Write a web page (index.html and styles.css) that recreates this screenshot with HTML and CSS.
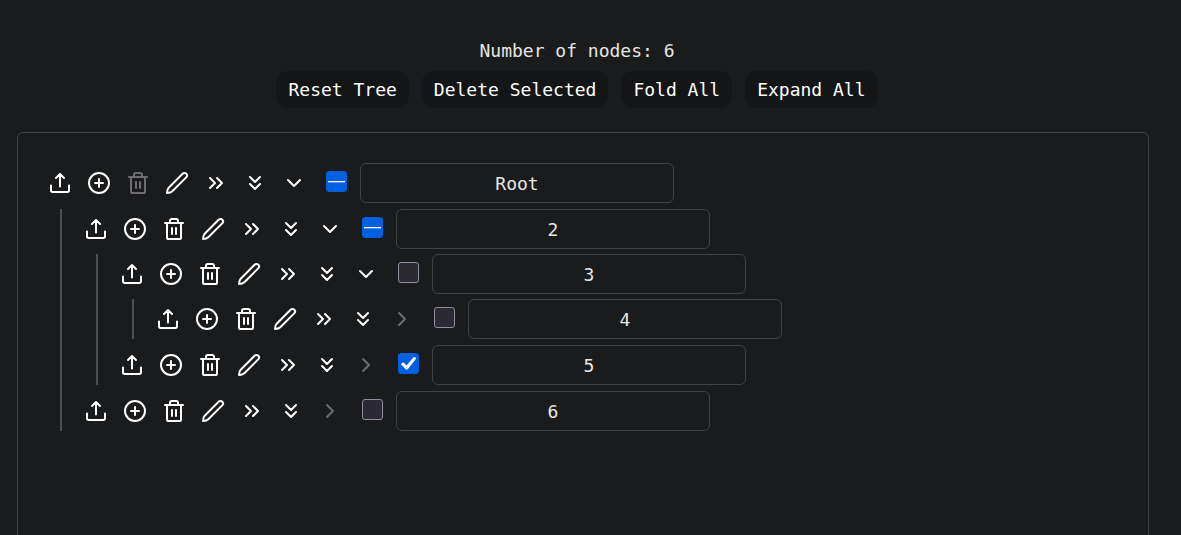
FILE: index.html
```html
<!DOCTYPE html>
<html lang="en">
<head>
<meta charset="utf-8">
<meta name="viewport" content="width=device-width, initial-scale=1">
<title>Node tree</title>
<link rel="stylesheet" href="styles.css">
</head>
<body>
<svg class="sprite" aria-hidden="true">
  <symbol id="upload" viewBox="0 0 24 24"><path d="M12 15.500V3M8 7 12 3 16 7M3 14.500v4.800Q3 21 4.700 21h14.600Q21 21 21 19.300V14.500"/></symbol>
  <symbol id="add" viewBox="0 0 24 24"><circle cx="12" cy="12" r="10"/><path d="M12 8v8M8 12h8"/></symbol>
  <symbol id="trash" viewBox="0 0 24 24"><path d="M3 6h18M5 6v14.400Q5 22 6.600 22h10.800Q19 22 19 20.400V6M8 6V4Q8 2 9.800 2h4.400Q16 2 16 4v2M10 11v6M14 11v6"/></symbol>
  <symbol id="edit" viewBox="0 0 24 24"><path d="M2 22C2 19.600 2.300 18.100 3.700 16.700L17.600 2.800C18.700 1.700 20.200 1.600 21.300 2.700C22.400 3.800 22.300 5.300 21.200 6.400L7.300 20.300C5.900 21.700 4.400 22 2 22Z"/></symbol>
  <symbol id="double-right" viewBox="0 0 24 24"><path d="m6 7 5 5-5 5M13 7l5 5-5 5"/></symbol>
  <symbol id="double-down" viewBox="0 0 24 24"><path d="m7 6 5 5 5-5M7 13l5 5 5-5"/></symbol>
  <symbol id="open" viewBox="0 0 24 24"><path d="m6 9 6 6 6-6"/></symbol>
  <symbol id="closed" viewBox="0 0 24 24"><path d="m9 6 6 6-6 6"/></symbol>
</svg>
<main class="page">
  <header class="header">
    <p class="count">Number of nodes: 6</p>
    <div class="actions">
      <button class="action" type="button">Reset Tree</button>
      <button class="action" type="button">Delete Selected</button>
      <button class="action" type="button">Fold All</button>
      <button class="action" type="button">Expand All</button>
    </div>
  </header>
  <section class="panel" aria-label="Tree">
    <ul class="tree"></ul>
  </section>
</main>
<script src="tree.js"></script>
</body>
</html>
```
FILE: styles.css
```css
*,
*::before {
  box-sizing: border-box;
}

html {
  background: #1a1b1c;
  scrollbar-width: none;
}

body {
  margin: 0;
  color: #e8e6e3;
  font: 18px/26px "DejaVu Sans Mono", "Liberation Mono", monospace;
}

.sprite {
  display: none;
}

.page {
  padding: 38px 32px 32px 17px;
}

.header {
  display: flex;
  flex-direction: column;
  align-items: center;
  gap: 7px;
  padding-right: 12px;
}

.count {
  margin: 0;
}

.actions {
  display: flex;
  flex-wrap: wrap;
  justify-content: center;
  gap: 13px;
}

.action {
  padding: 6px 12px 5px;
  border: 0;
  border-radius: 12px;
  background: #141517;
  color: #fff;
  font: inherit;
}

.panel {
  min-height: 100vh;
  margin-top: 24px;
  padding: 30px;
  border: 1px solid #3e4446;
  border-radius: 6px;
}

.tree,
.children {
  display: flex;
  flex-direction: column;
  gap: 6px;
  margin: 0;
  padding: 0;
  list-style: none;
}

.children {
  margin: 6px 0 0 12px;
  padding-left: 22px;
  border-left: 2px solid #4a4f52;
}

.children .children {
  margin-top: 5px;
}

.row {
  display: flex;
  align-items: center;
}

.tools {
  display: flex;
  gap: 15px;
  margin-right: 20px;
}

.tool {
  display: flex;
  padding: 0;
  border: 0;
  background: none;
  color: #fff;
}

.tool:disabled {
  color: #6c6c72;
}

.icon {
  width: 24px;
  height: 24px;
  fill: none;
  stroke: currentColor;
  stroke-width: 2;
  stroke-linecap: round;
  stroke-linejoin: round;
}

.check {
  display: grid;
  place-items: center;
  appearance: none;
  width: 21px;
  height: 21px;
  margin: 0 13px 3px 0;
  border: 1px solid #8f8f9d;
  border-radius: 3px;
  background: #2b2a33;
}

.check:checked,
.check:indeterminate {
  border-color: #0060df;
  background: #0060df;
}

.check:checked::before {
  content: "";
  width: 15px;
  height: 13px;
  background: #fff;
  clip-path: polygon(0 56%, 10% 43%, 20% 45%, 37% 66%, 83% 2%, 94% 0, 100% 13%, 44% 96%, 32% 96%);
}

.check:indeterminate::before {
  content: "";
  width: 17px;
  height: 1px;
  background: #fff;
  box-shadow: 0 1px rgb(255 255 255 / 30%);
}

.name {
  width: 314px;
  height: 40px;
  padding: 0 12px;
  border: 1px solid #3e4446;
  border-radius: 6px;
  background: transparent;
  color: inherit;
  font: inherit;
  text-align: center;
}
```
FILE: tree.js
```js
const root = {
  name: "Root", state: "mixed", root: true, children: [
    { name: "2", state: "mixed", children: [
      { name: "3", children: [{ name: "4" }] },
      { name: "5", state: "checked" }
    ] },
    { name: "6" }
  ]
};

function tool(icon, label, disabled) {
  return `<button class="tool" type="button" aria-label="${label}"${disabled ? " disabled" : ""}><svg class="icon" aria-hidden="true"><use href="#${icon}"/></svg></button>`;
}

function render(node) {
  const item = document.createElement("li");
  item.innerHTML = `<div class="row"><div class="tools">
    ${tool("upload", "Add parent")}
    ${tool("add", "Add child")}
    ${tool("trash", "Delete", node.root)}
    ${tool("edit", "Edit")}
    ${tool("double-right", "Fold descendants")}
    ${tool("double-down", "Expand descendants")}
    ${node.children ? tool("open", "Fold") : tool("closed", "Expand", true)}
    </div><input class="check" type="checkbox" aria-label="Select ${node.name}"><input class="name" type="text" aria-label="Node name" value="${node.name}"></div>`;
  const check = item.querySelector(".check");
  check.checked = node.state === "checked";
  check.indeterminate = node.state === "mixed";
  if (node.children) {
    const list = document.createElement("ul");
    list.className = "children";
    list.append(...node.children.map(render));
    item.append(list);
  }
  return item;
}

document.querySelector(".tree").append(render(root));
```
